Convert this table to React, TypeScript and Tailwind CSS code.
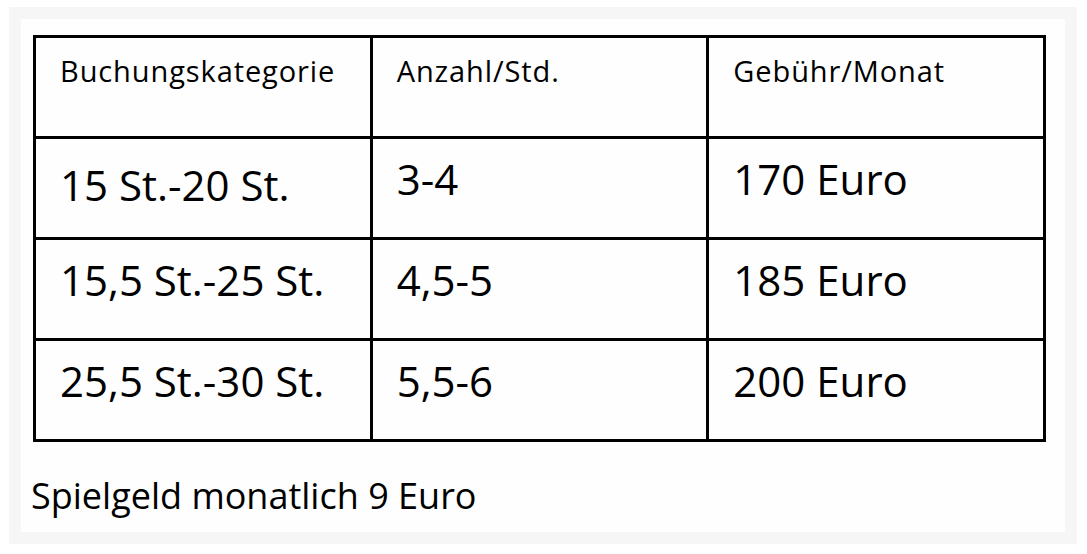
const headers = ['Buchungskategorie', 'Anzahl/Std.', 'Gebühr/Monat']

const rows = [
  ['15 St.-20 St.', '3-4', '170 Euro'],
  ['15,5 St.-25 St.', '4,5-5', '185 Euro'],
  ['25,5 St.-30 St.', '5,5-6', '200 Euro'],
]

export default function App() {
  return (
    <div
      className="w-[1087px] h-[554px] bg-white pl-[9px] pt-[7px] text-black"
      style={{ fontFamily: '"Open Sans", Lato, sans-serif' }}
    >
      <div className="w-[1068px] h-[537px] border-[12px] border-[#f6f6f6] bg-[#fefefe]">
        <div className="pl-[12px] pt-[16px]">
          <div className="grid w-[1013px] grid-cols-3 border-l-[3px] border-t-[3px] border-black">
            {headers.map((h) => (
              <div
                key={h}
                className="h-[101px] border-r-[3px] border-b-[3px] border-black pl-[24px] pt-[16px] text-[29px] leading-[1.2] tracking-[0.9px]"
              >
                {h}
              </div>
            ))}
            {rows.map((row, ri) =>
              row.map((cell, ci) => (
                <div
                  key={ri + '-' + ci}
                  className={
                    'h-[101px] border-r-[3px] border-b-[3px] border-black pl-[24px] text-[42px] leading-[1.2] ' +
                    (ri === 0 && ci === 0 ? 'pt-[21px]' : 'pt-[15px]')
                  }
                >
                  {cell}
                </div>
              ))
            )}
          </div>
        </div>
        <p className="pl-[10px] pt-[32px] text-[36px] leading-[1.2]">Spielgeld monatlich 9 Euro</p>
      </div>
    </div>
  )
}
